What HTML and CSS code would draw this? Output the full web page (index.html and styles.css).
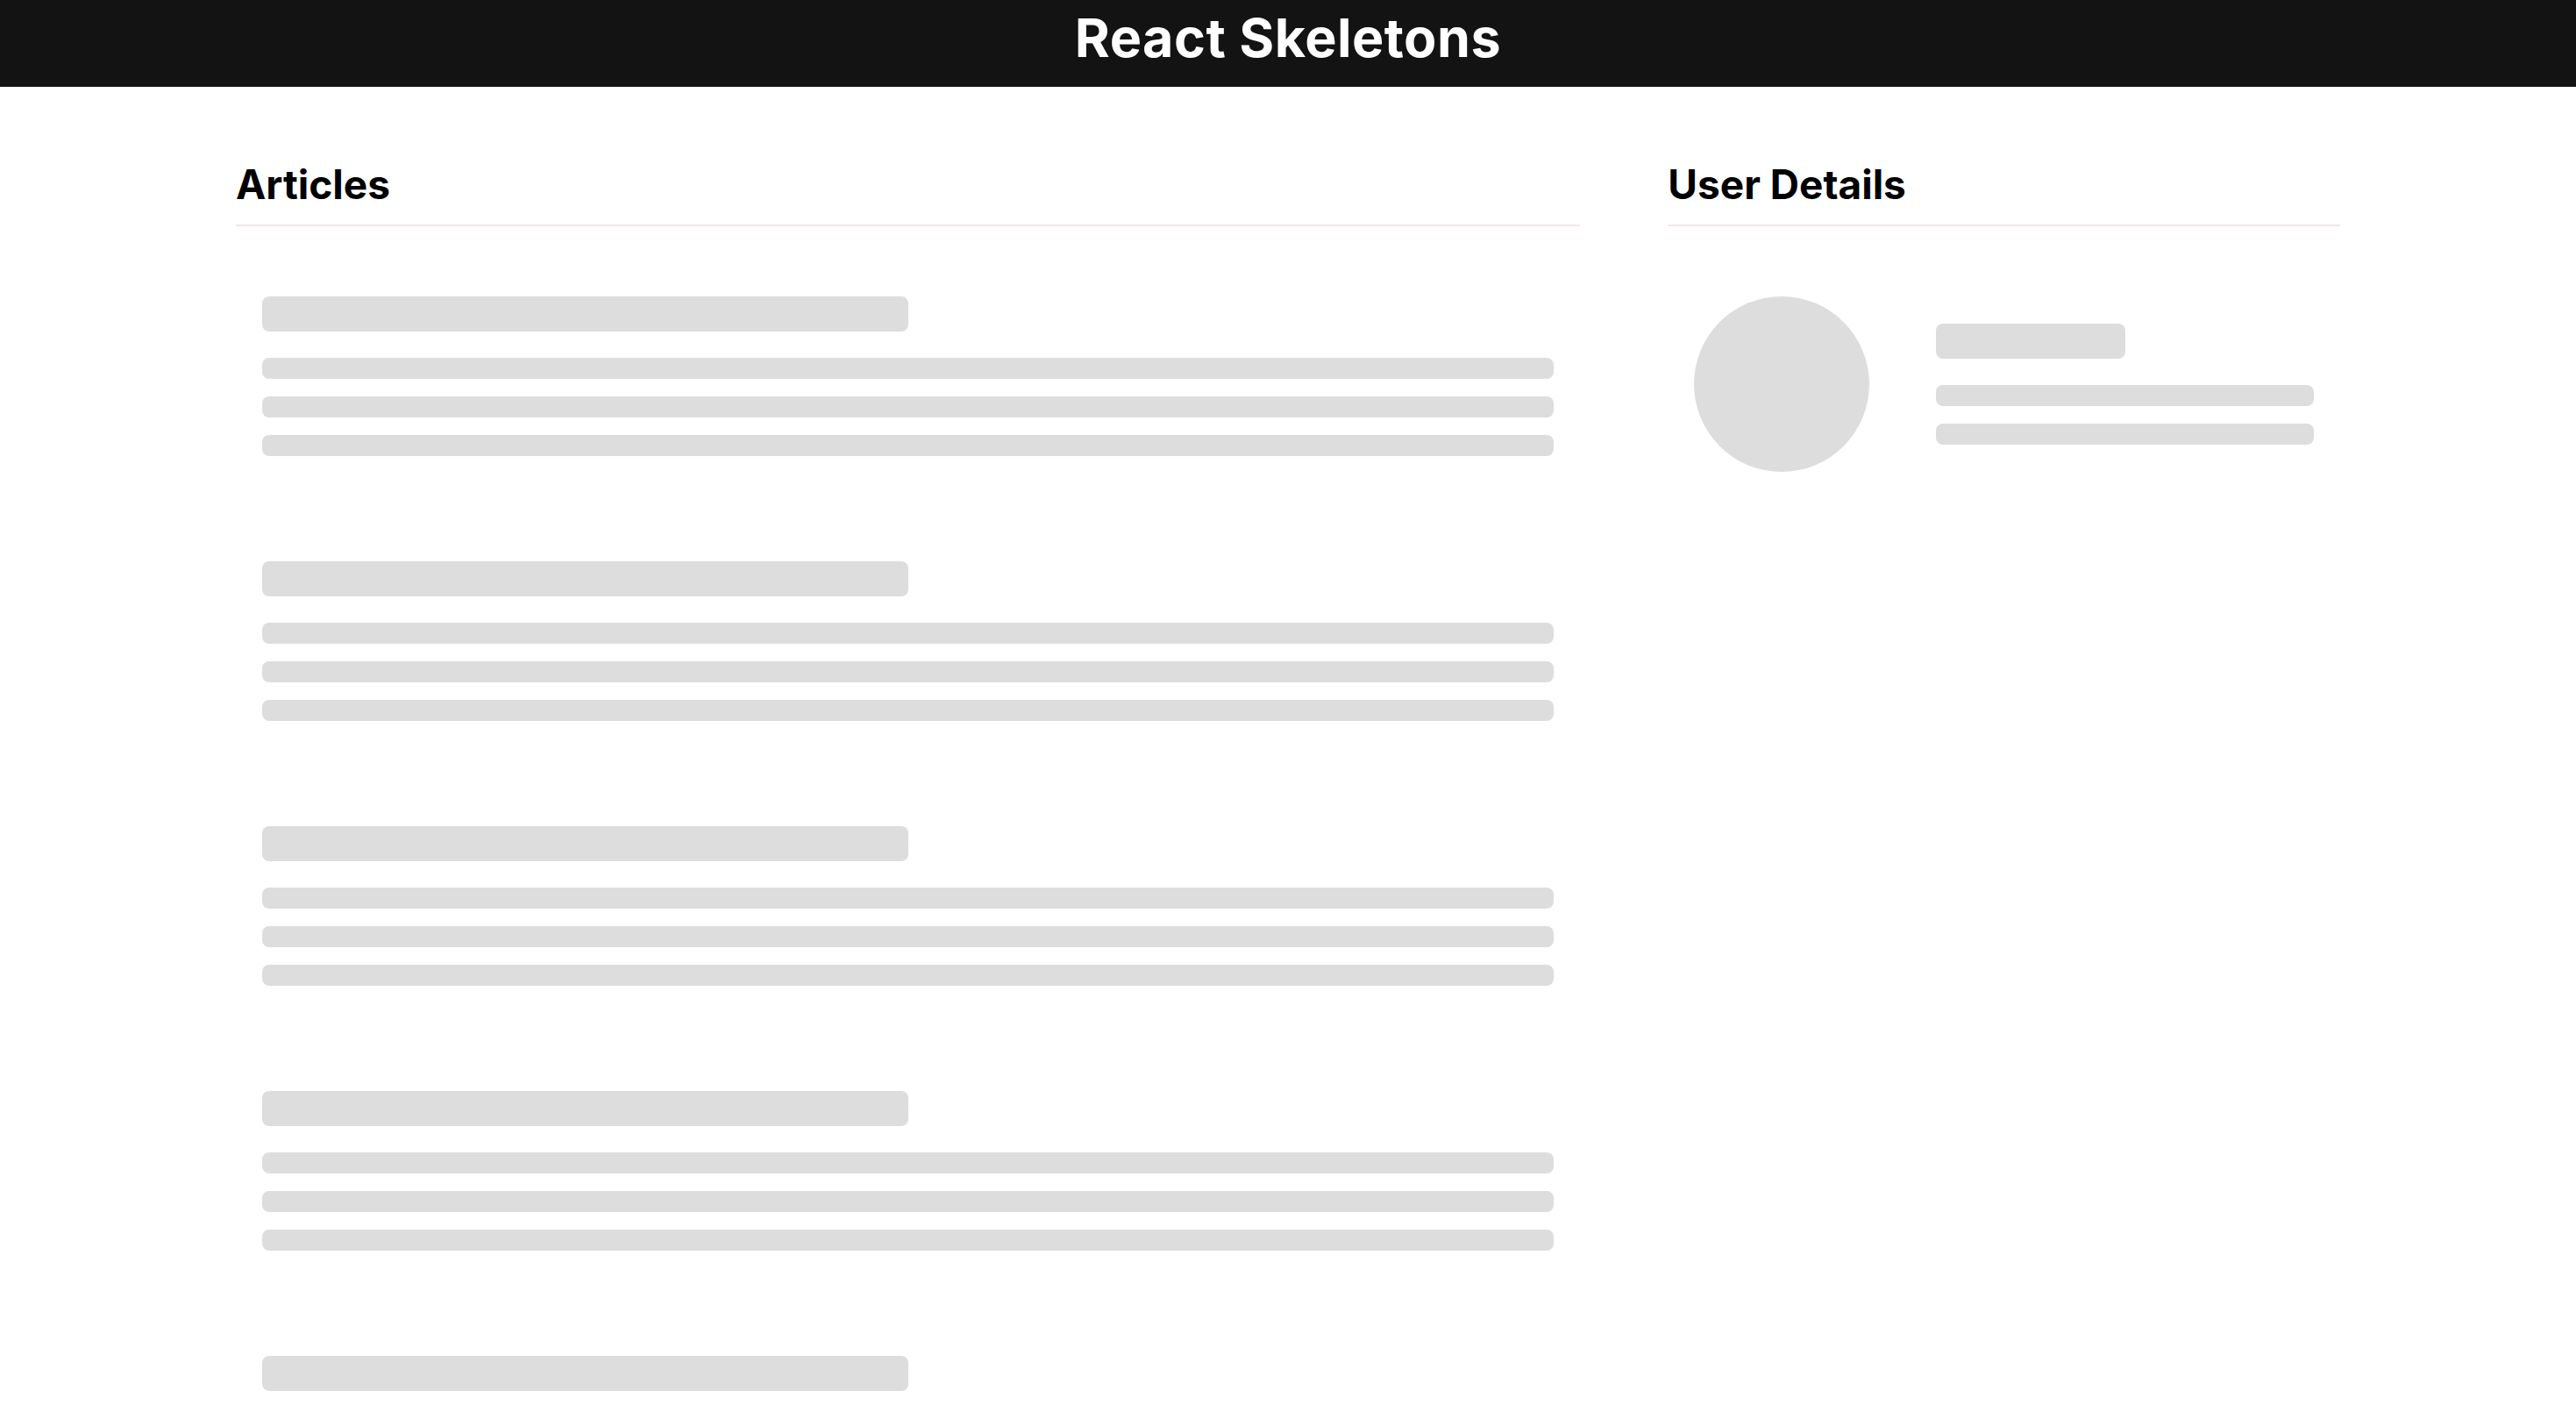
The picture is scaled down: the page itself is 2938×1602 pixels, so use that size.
FILE: index.html
```html
<!DOCTYPE html>
<html lang="en">
<head>
<meta charset="utf-8">
<title>React Skeletons</title>
<link rel="stylesheet" href="styles.css">
</head>
<body>
<header class="site-header">
  <h1 class="site-title">React Skeletons</h1>
</header>
<main class="content">
  <section class="articles">
    <h2 class="section-title">Articles</h2>
    <div class="article-list">
      <div class="skeleton-article">
        <div class="skeleton skeleton-title"></div>
        <div class="skeleton-lines">
          <div class="skeleton skeleton-text"></div>
          <div class="skeleton skeleton-text"></div>
          <div class="skeleton skeleton-text"></div>
        </div>
      </div>
      <div class="skeleton-article">
        <div class="skeleton skeleton-title"></div>
        <div class="skeleton-lines">
          <div class="skeleton skeleton-text"></div>
          <div class="skeleton skeleton-text"></div>
          <div class="skeleton skeleton-text"></div>
        </div>
      </div>
      <div class="skeleton-article">
        <div class="skeleton skeleton-title"></div>
        <div class="skeleton-lines">
          <div class="skeleton skeleton-text"></div>
          <div class="skeleton skeleton-text"></div>
          <div class="skeleton skeleton-text"></div>
        </div>
      </div>
      <div class="skeleton-article">
        <div class="skeleton skeleton-title"></div>
        <div class="skeleton-lines">
          <div class="skeleton skeleton-text"></div>
          <div class="skeleton skeleton-text"></div>
          <div class="skeleton skeleton-text"></div>
        </div>
      </div>
      <div class="skeleton-article">
        <div class="skeleton skeleton-title"></div>
        <div class="skeleton-lines">
          <div class="skeleton skeleton-text"></div>
          <div class="skeleton skeleton-text"></div>
          <div class="skeleton skeleton-text"></div>
        </div>
      </div>
    </div>
  </section>
  <aside class="user">
    <h2 class="section-title">User Details</h2>
    <div class="skeleton-profile">
      <div class="skeleton skeleton-avatar"></div>
      <div class="profile-info">
        <div class="skeleton skeleton-title"></div>
        <div class="skeleton-lines">
          <div class="skeleton skeleton-text"></div>
          <div class="skeleton skeleton-text"></div>
        </div>
      </div>
    </div>
  </aside>
</main>
</body>
</html>
```

FILE: styles.css
```css
html, body {
  margin: 0;
  padding: 0;
  background: #ffffff;
}

body {
  font-family: Inter, "Liberation Sans", sans-serif;
  color: #000000;
}

.site-header {
  background: #131313;
  height: 99px;
  box-sizing: border-box;
  padding-top: 7px;
}

.site-title {
  margin: 0;
  color: #ffffff;
  text-align: center;
  font-size: 61px;
  font-weight: 700;
  letter-spacing: 0.5px;
  line-height: 72px;
}

.content {
  width: 2400px;
  margin: 83px auto 0;
  display: grid;
  grid-template-columns: 2fr 1fr;
  column-gap: 100px;
}

.section-title {
  margin: 0;
  font-size: 46px;
  font-weight: 700;
  line-height: 56px;
  padding-bottom: 18px;
  border-bottom: 2px solid #f3e7e6;
}

.article-list {
  display: flex;
  flex-direction: column;
  gap: 60px;
  margin-top: 50px;
}

.skeleton-article {
  padding: 30px;
  display: flex;
  flex-direction: column;
  gap: 30px;
}

.skeleton {
  background: #dddddd;
  border-radius: 8px;
}

.skeleton-title {
  width: 50%;
  height: 40px;
}

.skeleton-lines {
  display: flex;
  flex-direction: column;
  gap: 20px;
}

.skeleton-text {
  height: 24px;
}

.skeleton-profile {
  margin-top: 50px;
  padding: 30px;
  display: flex;
  align-items: center;
  gap: 76px;
}

.skeleton-avatar {
  width: 200px;
  height: 200px;
  flex: none;
  border-radius: 50%;
}

.profile-info {
  flex: 1;
  display: flex;
  flex-direction: column;
  gap: 30px;
}
```
